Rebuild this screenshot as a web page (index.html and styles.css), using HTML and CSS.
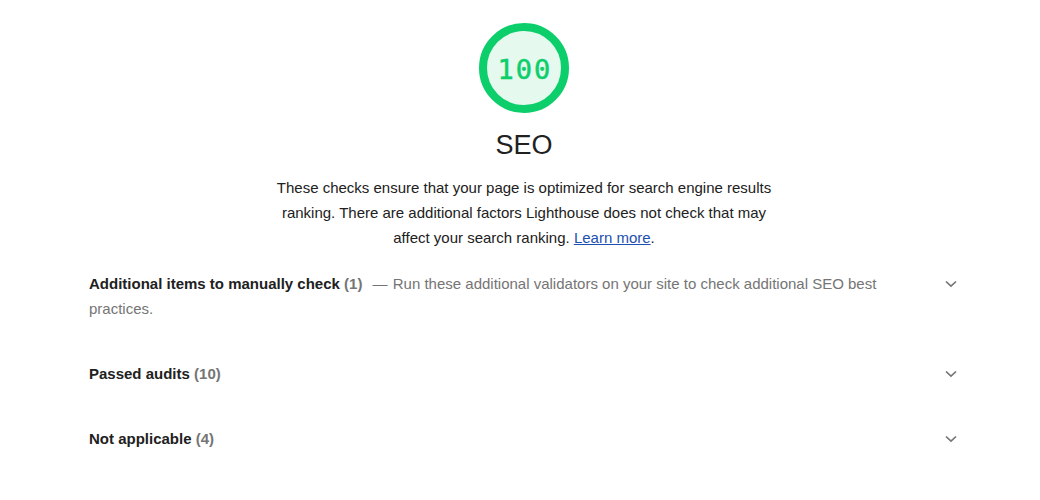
FILE: index.html
```html
<!DOCTYPE html>
<html>
<head>
<meta charset="utf-8">
<link rel="stylesheet" href="styles.css">
</head>
<body>
<div class="category">
  <div class="header">
    <div class="gauge">
      <svg class="gauge-svg" width="90" height="90" viewBox="0 0 90 90">
        <circle cx="45" cy="45" r="41" fill="#e5f9ee" stroke="#0cce6b" stroke-width="8"/>
      </svg>
      <span class="gauge-value">100</span>
    </div>
    <div class="title">SEO</div>
    <div class="desc">These checks ensure that your page is optimized for search engine results ranking. There are additional factors Lighthouse does not check that may affect your search ranking. <a href="#">Learn more</a>.</div>
  </div>
  <div class="group first">
    <div class="group-text"><span class="group-title">Additional items to manually check</span> <span class="count">(1)</span> <span class="group-desc"><span class="dash">—</span> Run these additional validators on your site to check additional SEO best practices.</span></div>
    <svg class="chevron" width="12" height="8" viewBox="0 0 12 8"><path d="M1 1.5 L6 6.2 L11 1.5" fill="none" stroke="#757575" stroke-width="1.7"/></svg>
  </div>
  <div class="group">
    <div class="group-text"><span class="group-title">Passed audits</span> <span class="count">(10)</span></div>
    <svg class="chevron" width="12" height="8" viewBox="0 0 12 8"><path d="M1 1.5 L6 6.2 L11 1.5" fill="none" stroke="#757575" stroke-width="1.7"/></svg>
  </div>
  <div class="group">
    <div class="group-text"><span class="group-title">Not applicable</span> <span class="count">(4)</span></div>
    <svg class="chevron" width="12" height="8" viewBox="0 0 12 8"><path d="M1 1.5 L6 6.2 L11 1.5" fill="none" stroke="#757575" stroke-width="1.7"/></svg>
  </div>
</div>
</body>
</html>
```
FILE: styles.css
```css
html, body {
  margin: 0;
  padding: 0;
  background: #fff;
}
body {
  font-family: "Liberation Sans", Arial, sans-serif;
  font-size: 15px;
  line-height: 25px;
  color: #212121;
}
.category {
  width: 872px;
  margin-left: 88px;
  padding-top: 23px;
}
.header {
  display: flex;
  flex-direction: column;
  align-items: center;
}
.gauge {
  position: relative;
  width: 90px;
  height: 90px;
}
.gauge-svg {
  display: block;
}
.gauge-value {
  position: absolute;
  inset: 0;
  display: flex;
  align-items: center;
  justify-content: center;
  padding-left: 2px;
  padding-top: 3px;
  font-family: "DejaVu Sans Mono", monospace;
  font-size: 27px;
  letter-spacing: 2px;
  color: #0cce6b;
  line-height: 1;
  -webkit-text-stroke: 0.5px #0cce6b;
}
.title {
  font-size: 27px;
  line-height: 32px;
  margin-top: 16px;
  color: #212121;
}
.desc {
  width: 510px;
  text-align: center;
  margin-top: 14px;
}
.desc a {
  color: #1c4fb0;
}
.group {
  display: flex;
  align-items: flex-start;
  justify-content: space-between;
  margin-top: 40px;
  padding-left: 1px;
}
.group.first {
  margin-top: 21px;
}
.group-text {
  flex: 1;
  padding-right: 60px;
}
.group-title {
  font-weight: bold;
}
.count {
  font-weight: bold;
  color: #757575;
}
.group-desc {
  color: #757575;
  margin-left: 6px;
}
.dash {
  margin-right: 1px;
}
.chevron {
  margin-top: 9px;
  margin-right: 3px;
  flex: none;
}
```
